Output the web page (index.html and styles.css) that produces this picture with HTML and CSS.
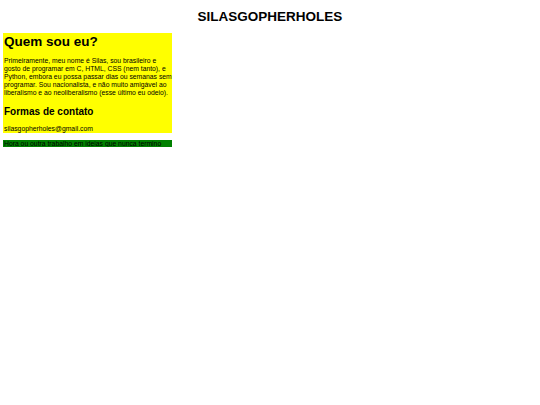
FILE: index.html
```html
<!DOCTYPE html>
<html lang="pt-BR">
<head>
<meta charset="utf-8">
<title>SILASGOPHERHOLES</title>
<link rel="stylesheet" href="styles.css">
</head>
<body>
<h1 class="site-title">SILASGOPHERHOLES</h1>
<main class="content">
  <section class="about">
    <h2 class="about-title">Quem sou eu?</h2>
    <p class="about-text">Primeiramente, meu nome é Silas, sou brasileiro e gosto de programar em C, HTML, CSS (nem tanto), e Python, embora eu possa passar dias ou semanas sem programar. Sou nacionalista, e não muito amigável ao liberalismo e ao neoliberalismo (esse último eu odeio).</p>
    <h3 class="contact-title">Formas de contato</h3>
    <p class="contact-text">silasgopherholes@gmail.com</p>
  </section>
  <div class="work">Hora ou outra trabalho em ideias que nunca termino</div>
</main>
</body>
</html>
```
FILE: styles.css
```css
html, body {
  margin: 0;
  padding: 0;
  background: #ffffff;
  color: #000000;
  font-family: "Liberation Sans", Arial, sans-serif;
}
.site-title {
  margin: 0;
  padding-top: 8px;
  font-size: 13.5px;
  line-height: 17px;
  text-align: center;
  font-weight: bold;
}
.content {
  width: 169px;
  margin-left: 3px;
  margin-top: 8px;
  display: flex;
  flex-direction: column;
  gap: 7px;
}
.about {
  background: #ffff00;
  padding: 1px 0 1px 1px;
}
.about-title {
  margin: 0;
  font-size: 13.5px;
  line-height: 16px;
  font-weight: bold;
}
.about-text {
  margin: 7px 0 0 0;
  font-size: 6.8px;
  line-height: 8px;
}
.contact-title {
  margin: 9px 0 0 0;
  font-size: 10px;
  line-height: 12px;
  font-weight: bold;
}
.contact-text {
  margin: 7px 0 0 0;
  font-size: 6.8px;
  line-height: 7px;
}
.work {
  background: #008000;
  font-size: 6.8px;
  line-height: 7px;
  padding-left: 1px;
}
```
